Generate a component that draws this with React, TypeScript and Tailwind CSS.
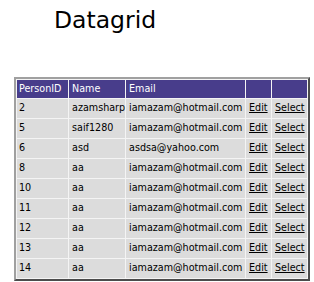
import React from "react";

const rows: [string, string, string][] = [
  ["2", "azamsharp", "iamazam@hotmail.com"],
  ["5", "saif1280", "iamazam@hotmail.com"],
  ["6", "asd", "asdsa@yahoo.com"],
  ["8", "aa", "iamazam@hotmail.com"],
  ["10", "aa", "iamazam@hotmail.com"],
  ["11", "aa", "iamazam@hotmail.com"],
  ["12", "aa", "iamazam@hotmail.com"],
  ["13", "aa", "iamazam@hotmail.com"],
  ["14", "aa", "iamazam@hotmail.com"],
];

export default function App() {
  return (
    <div className="w-[314px] h-[282px] bg-white overflow-hidden" style={{ fontFamily: '"DejaVu Sans", Verdana, sans-serif' }}>
      <div className="pl-[54px] pt-[5px] text-[23.5px] leading-[30px] text-black">Datagrid</div>
      <div className="pl-[14px] pt-[42px]">
        <table className="w-[296px] table-fixed border-separate border-spacing-[1px] border-2 [border-style:outset] border-[#a0a0a0] bg-[#f4f4f4] text-[9.6px]">
          <colgroup>
            <col className="w-[51px]" />
            <col className="w-[56px]" />
            <col className="w-[119px]" />
            <col className="w-[25px]" />
            <col className="w-[35px]" />
          </colgroup>
          <thead>
            <tr className="h-[18px] bg-[#483d8b] text-white">
              <td className="pl-[2px] p-0 font-normal whitespace-nowrap">PersonID</td>
              <td className="pl-[3px] p-0 whitespace-nowrap">Name</td>
              <td className="pl-[3px] p-0 whitespace-nowrap">Email</td>
              <td className="p-0"></td>
              <td className="p-0"></td>
            </tr>
          </thead>
          <tbody>
            {rows.map((r, i) => (
              <tr key={i} className="h-[19px] bg-[#dcdcdc] text-black">
                <td className="pl-[2px] whitespace-nowrap">{r[0]}</td>
                <td className="pl-[3px] whitespace-nowrap">{r[1]}</td>
                <td className="pl-[3px] whitespace-nowrap">{r[2]}</td>
                <td className="pl-[3px] whitespace-nowrap"><span className="underline">Edit</span></td>
                <td className="pl-[3px] whitespace-nowrap"><span className="underline">Select</span></td>
              </tr>
            ))}
          </tbody>
        </table>
      </div>
    </div>
  );
}
